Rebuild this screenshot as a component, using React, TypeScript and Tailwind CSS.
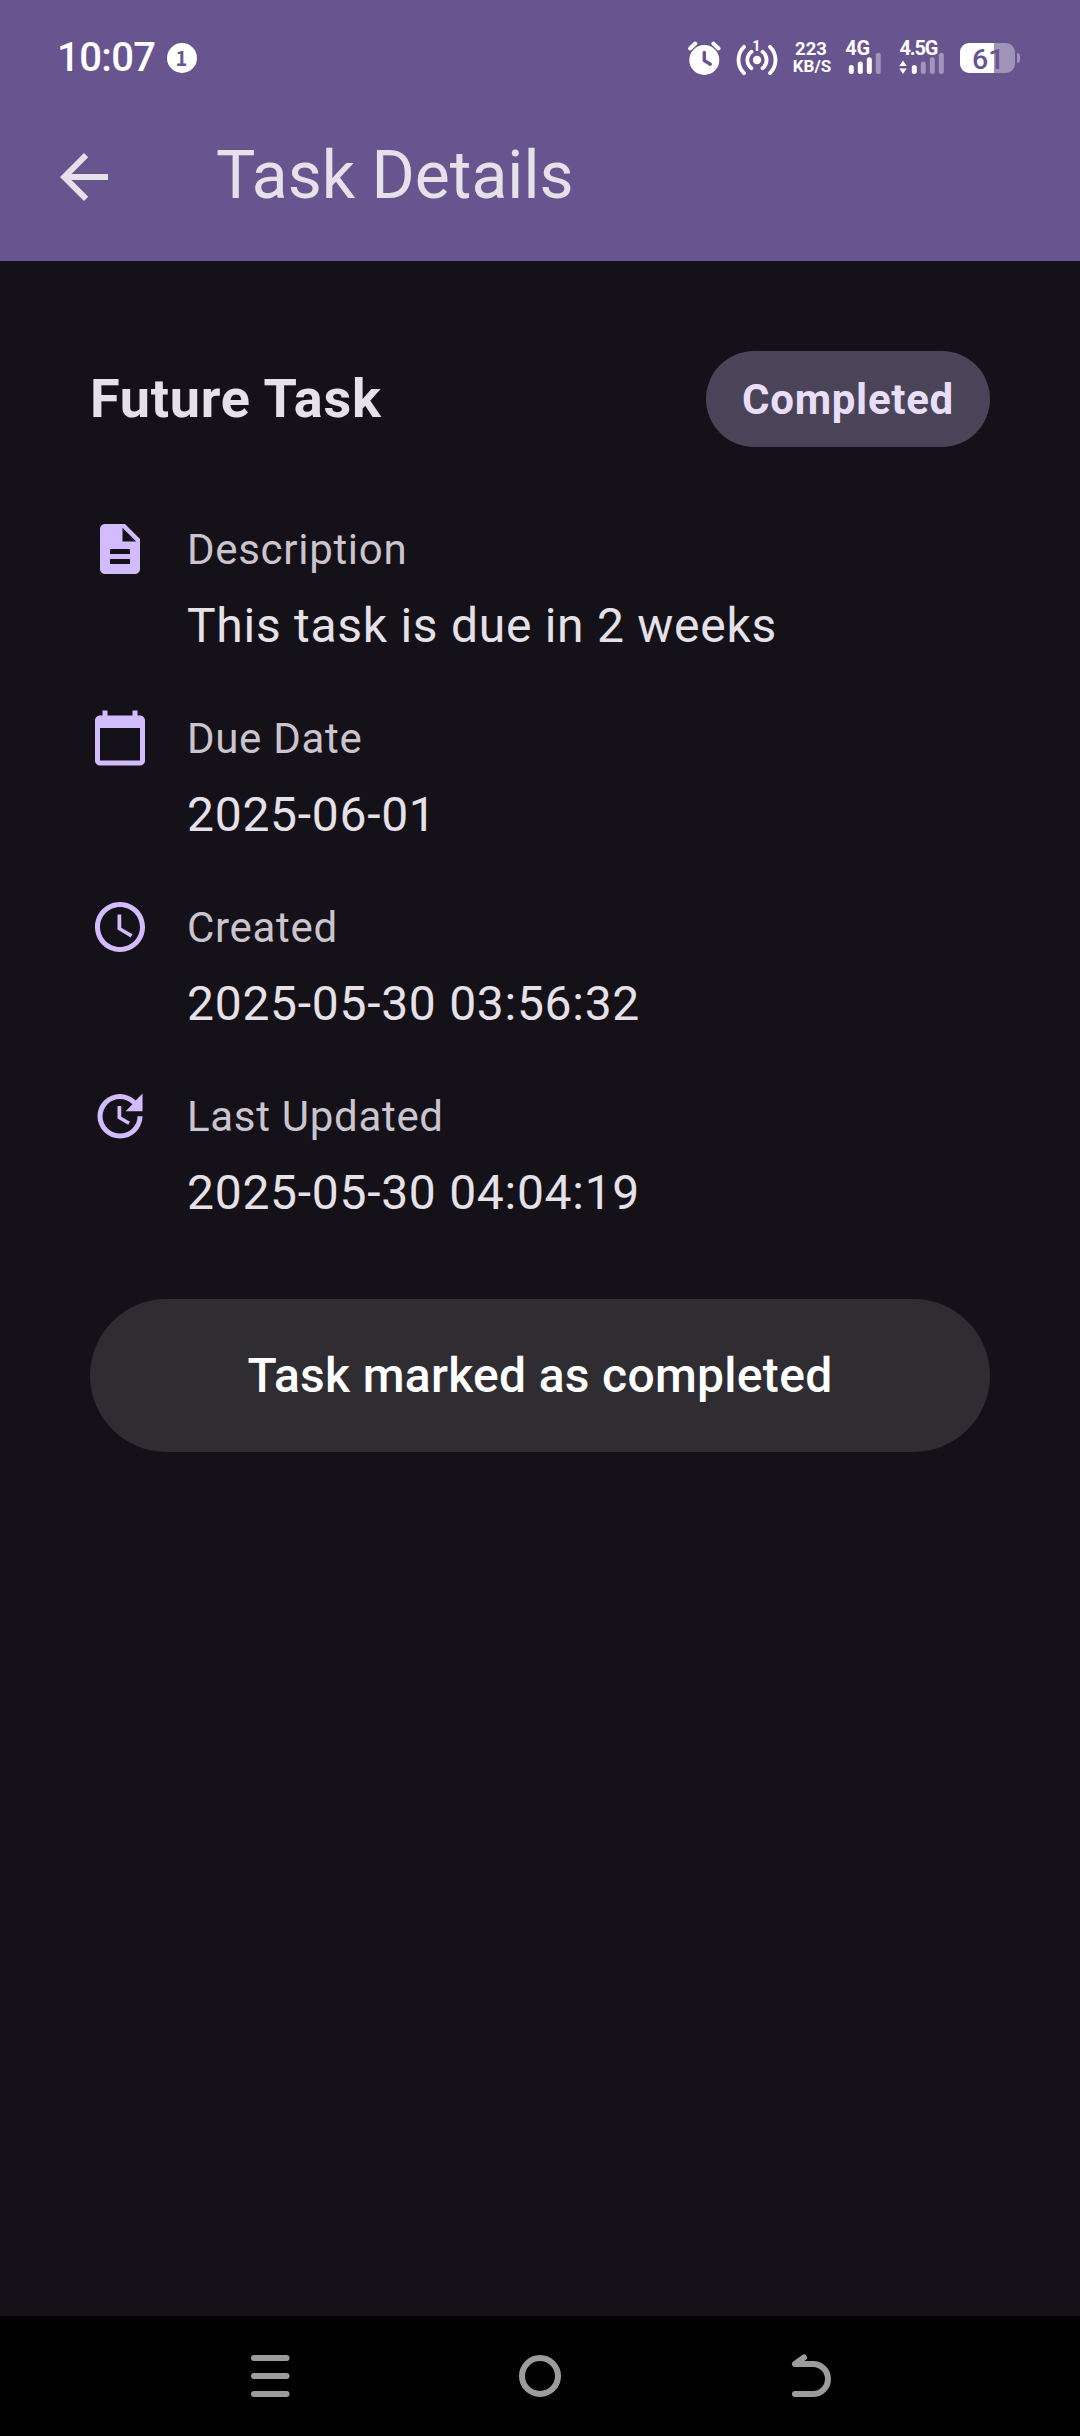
import React from "react";

const rows = [
  { label: "Description", value: "This task is due in 2 weeks", d: "M14 2H6c-1.1 0-1.99.9-1.99 2L4 20c0 1.1.89 2 1.99 2H18c1.1 0 2-.9 2-2V8l-6-6zm2 16H8v-2h8v2zm0-4H8v-2h8v2zm-3-5V3.500L18.500 9H13z" },
  { label: "Due Date", value: "2025-06-01", d: "M20 3h-1V1h-2v2H7V1H5v2H4c-1.1 0-2 .9-2 2v16c0 1.1.9 2 2 2h16c1.1 0 2-.9 2-2V5c0-1.100-.9-2-2-2zm0 18H4V8h16v13z" },
  { label: "Created", value: "2025-05-30 03:56:32", d: "M11.990 2C6.470 2 2 6.480 2 12s4.470 10 9.990 10C17.520 22 22 17.520 22 12S17.520 2 11.990 2zM12 20c-4.420 0-8-3.580-8-8s3.580-8 8-8 8 3.580 8 8-3.580 8-8 8zm.5-13H11v6l5.250 3.150.75-1.230-4.500-2.670z" },
  { label: "Last Updated", value: "2025-05-30 04:04:19", d: "M21 10.120h-6.780l2.740-2.820c-2.730-2.700-7.150-2.800-9.880-.1-2.730 2.710-2.730 7.080 0 9.790s7.150 2.710 9.880 0C18.320 15.650 19 14.080 19 12.100h2c0 1.980-.88 4.550-2.640 6.290-3.510 3.480-9.210 3.480-12.720 0-3.500-3.470-3.530-9.110-.02-12.580s9.140-3.470 12.650 0L21 3v7.120zM12.500 8v4.250l3.500 2.080-.72 1.210L11 13V8h1.500z" },
];

function SignalBars({ x, active }: { x: number; active: number }) {
  return (
    <g strokeWidth="5" strokeLinecap="round" stroke="#fff">
      {[30.5, 27, 22.800, 18.300].map((top, i) => (
        <line key={top} x1={x + i * 9} x2={x + i * 9} y1={top} y2={34.500} opacity={i < active ? 1 : 0.38} />
      ))}
    </g>
  );
}

function AlarmIcon() {
  return (
    <svg viewBox="0 0 37 40" className="h-10 w-[37px]" fill="none" strokeLinecap="round" strokeLinejoin="round">
      <circle cx="18.300" cy="23" r="15" fill="#fff" />
      <path d="M4 11.500l5.300-5M32.600 11.500l-5.300-5" stroke="#fff" strokeWidth="4" />
      <path d="M18.300 15.500v8l6 3.700" stroke="#68548e" strokeWidth="3.400" />
    </svg>
  );
}

function HotspotIcon() {
  return (
    <svg viewBox="0 0 44 40" className="ml-3 h-10 w-11" fill="none">
      <circle cx="22" cy="23" r="4.200" fill="#fff" />
      <g stroke="#fff" strokeWidth="3.800" strokeLinecap="round">
        <path d="M16.500 14.800a10.200 10.200 0 0 0 0 16.400M27.500 14.800a10.200 10.200 0 0 1 0 16.400" />
        <path d="M9 9.800a18.600 18.600 0 0 0 0 26.400M35 9.800a18.600 18.600 0 0 1 0 26.400" />
      </g>
      <text x="21.500" y="13.800" textAnchor="middle" fontSize="14.500" fontWeight="700" fill="#fff">1</text>
    </svg>
  );
}

function Battery() {
  return (
    <svg viewBox="0 0 64 40" className="ml-[13px] h-10 w-16">
      <path d="M36 6h12a9 9 0 0 1 9 9v12a9 9 0 0 1-9 9H36zM59 16a3 3 0 0 1 3 3v4a3 3 0 0 1-3 3z" fill="#fff" opacity=".37" />
      <path d="M36 6H11a9 9 0 0 0-9 9v12a9 9 0 0 0 9 9h25z" fill="#fff" />
      <text x="30.200" y="32.200" textAnchor="middle" fontSize="28.500" fontWeight="500" fill="#68548e">61</text>
    </svg>
  );
}

export default function App() {
  return (
    <div className="flex h-[2436px] w-[1080px] flex-col bg-[#141218] font-['Roboto',sans-serif] text-[#e6e0e9]">
      <header className="h-[261px] bg-[#68548e]">
        <div className="flex h-[116px] items-start justify-between pr-[58px] pl-[57px] text-white">
          <div className="flex items-start pt-[38px]">
            <span className="text-[40px] leading-10 font-medium tracking-[-0.6px]">10:07</span>
            <span className="mt-[5px] ml-[11px] flex size-[30px] items-center justify-center rounded-full bg-white font-['Noto_Sans_CJK_SC',sans-serif] text-[20px] leading-[30px] font-bold text-[#68548e]">1</span>
          </div>
          <div className="flex pt-[37px]">
            <AlarmIcon />
            <HotspotIcon />
            <div className="ml-[11px] flex w-[45px] flex-col items-center pt-[3px] text-[18.500px] leading-[18px] font-bold">
              <span className="-ml-[3px]">223</span>
              <span className="-ml-[1px] text-[17px] leading-[17px]">KB/S</span>
            </div>
            <svg viewBox="0 0 40 40" className="ml-2 h-10 w-10">
              <text x="2.200" y="18.300" fontSize="20" fontWeight="700" fill="#fff" textLength="25" lengthAdjust="spacingAndGlyphs">4G</text>
              <SignalBars x={8.300} active={3} />
            </svg>
            <svg viewBox="0 0 48 40" className="ml-[14px] h-10 w-12">
              <text x="2.500" y="18.300" fontSize="20" fontWeight="700" fill="#fff" textLength="39" lengthAdjust="spacing">4.5G</text>
              <path d="M6 23.600l3.700 5.400H2.300zM6 37l3.700-5.500H2.300z" fill="#fff" />
              <SignalBars x={17.300} active={1} />
            </svg>
            <Battery />
          </div>
        </div>
        <div className="flex h-[122px] items-center pl-12">
          <svg viewBox="0 0 24 24" className="size-[72px]" fill="currentColor"><path d="M20 11H7.830l5.590-5.590L12 4l-8 8 8 8 1.410-1.410L7.830 13H20v-2z" /></svg>
          <h1 className="ml-24 pb-[3px] text-[66px] leading-[84px]">Task Details</h1>
        </div>
      </header>
      <main className="flex grow flex-col px-[90px] pt-[90px]">
        <div className="flex h-24 items-center justify-between">
          <h2 className="text-[54px] leading-[72px] font-bold tracking-[0.75px]">Future Task</h2>
          <span className="flex h-24 w-[284px] items-center justify-center rounded-full bg-[#4a4458] text-[42px] font-bold tracking-[0.7px] text-[#e8def8]">Completed</span>
        </div>
        <div className="mt-[69px] flex flex-col">
          {rows.map((r) => (
            <div key={r.label} className="flex h-[189px]">
              <svg viewBox="0 0 24 24" className="mt-[3px] size-[60px] text-[#d3bcfd]" fill="currentColor"><path d={r.d} /></svg>
              <div className="ml-[37px]">
                <div className="h-[66px] text-[42px] leading-[68px] tracking-[0.7px] text-[#cbc4ce]">{r.label}</div>
                <div className="mt-[6px] text-[48px] leading-[75px] tracking-[0.72px]">{r.value}</div>
              </div>
            </div>
          ))}
        </div>
        <button className="mt-[27px] flex h-[153px] items-center justify-center rounded-full bg-[#2f2d32] text-[48px] font-medium tracking-[0.3px] text-white">
          Task marked as completed
        </button>
      </main>
      <nav className="flex h-[120px] items-center justify-between bg-[#020202] px-[249px]">
        <svg viewBox="0 0 42 42" className="size-[42px]" stroke="#9c9c9c" strokeWidth="6" strokeLinecap="round">
          <path d="M5 3h32.500M5 21h32.500M5 39h32.500" />
        </svg>
        <svg viewBox="0 0 42 42" className="size-[42px]" fill="none" stroke="#9c9c9c" strokeWidth="6">
          <circle cx="21" cy="21" r="18" />
        </svg>
        <svg viewBox="0 0 42 42" className="size-[42px] overflow-visible" fill="none" stroke="#9c9c9c" strokeWidth="6" strokeLinecap="round" strokeLinejoin="round">
          <path d="M15 2.500L6 9H24a15 15 0 0 1 0 30H6" />
        </svg>
      </nav>
    </div>
  );
}
